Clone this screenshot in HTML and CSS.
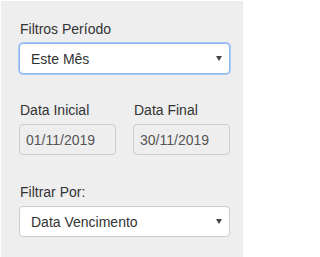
FILE: index.html
```html
<!DOCTYPE html>
<html lang="pt">
<head>
<meta charset="utf-8">
<link rel="stylesheet" href="styles.css">
</head>
<body>
<div class="panel">
  <div class="group">
    <label class="label">Filtros Período</label>
    <div class="select-wrap">
      <select class="select focused"><option>Este Mês</option></select>
    </div>
  </div>
  <div class="dates">
    <div class="group">
      <label class="label">Data Inicial</label>
      <input class="input" type="text" value="01/11/2019" readonly>
    </div>
    <div class="group">
      <label class="label">Data Final</label>
      <input class="input" type="text" value="30/11/2019" readonly>
    </div>
  </div>
  <div class="group">
    <label class="label">Filtrar Por:</label>
    <div class="select-wrap">
      <select class="select"><option>Data Vencimento</option></select>
    </div>
  </div>
</div>
</body>
</html>
```

FILE: styles.css
```css
html, body {
  margin: 0;
  padding: 0;
  background: #fff;
}
body {
  font-family: "Liberation Sans", Arial, sans-serif;
  font-size: 14px;
  color: #333;
}
.panel {
  margin: 1px 0 0 1px;
  width: 242px;
  height: 256px;
  background: #eee;
  box-sizing: border-box;
  padding: 18px 13px 0 18px;
  display: flex;
  flex-direction: column;
  gap: 26px;
}
.group {
  display: flex;
  flex-direction: column;
}
.label {
  display: block;
  line-height: 20px;
  height: 20px;
  margin-bottom: 4px;
  font-weight: normal;
  padding-left: 1px;
}
.select-wrap {
  position: relative;
}
.select-wrap::after {
  content: "";
  position: absolute;
  right: 8px;
  top: 13px;
  border-left: 3px solid transparent;
  border-right: 3px solid transparent;
  border-top: 5px solid #444;
  pointer-events: none;
}
.select {
  -webkit-appearance: none;
  appearance: none;
  display: block;
  width: 100%;
  height: 31px;
  margin: 0;
  padding: 0 20px 0 11px;
  box-sizing: border-box;
  border: 1px solid #ccc;
  border-radius: 4px;
  background: #fff;
  font-family: "Liberation Sans", Arial, sans-serif;
  font-size: 14px;
  color: #333;
  outline: none;
}
.select.focused {
  border-color: #8cb8f0;
  box-shadow: 0 0 0 1px #a9c9f5;
}
.dates {
  display: flex;
  justify-content: space-between;
  padding-right: 0;
}
.dates .group {
  width: 97px;
}
.dates .group + .group {
  margin-right: 0;
}
.input {
  display: block;
  width: 97px;
  height: 31px;
  margin: 0;
  padding: 0 6px;
  box-sizing: border-box;
  border: 1px solid #ccc;
  border-radius: 4px;
  background: #eee;
  font-family: "Liberation Sans", Arial, sans-serif;
  font-size: 14px;
  color: #555;
  outline: none;
}
.dates + .group {
  margin-top: 1px;
}
```
